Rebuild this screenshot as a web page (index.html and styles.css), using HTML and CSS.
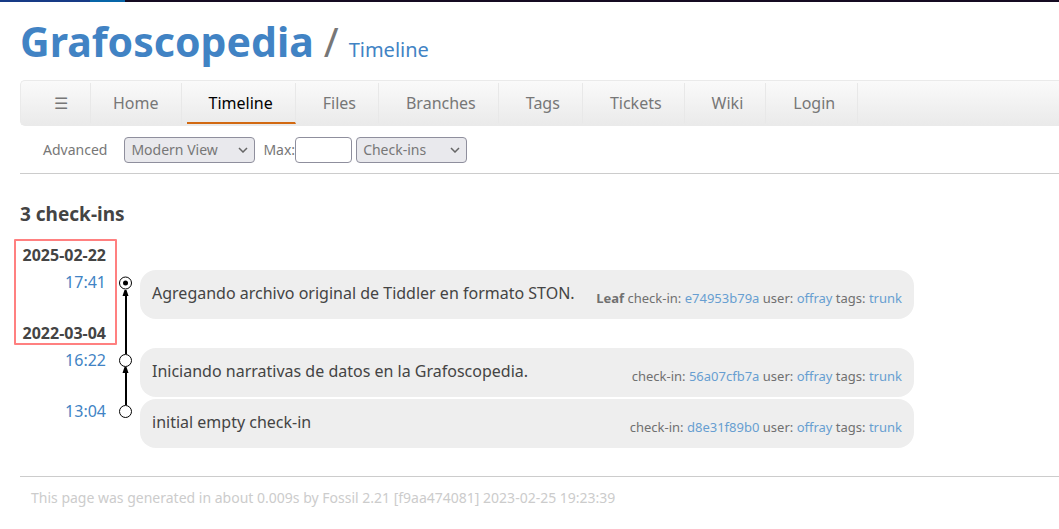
FILE: index.html
```html
<!DOCTYPE html>
<html lang="en">

<head>
    <meta charset="UTF-8">
    <meta name="viewport" content="width=device-width, initial-scale=1.0">
    <title>Grafoscopedia: Timeline</title>
    <link rel="stylesheet" href="styles.css">
</head>

<body>
    <div class="topStrip"></div>
    <header class="header">
        <h1 class="title"><a href="#">Grafoscopedia</a></h1>
        <span class="slash">/</span>
        <a class="pageTitle" href="#">Timeline</a>
    </header>
    <nav class="mainmenu">
        <a class="burger" href="#">☰</a>
        <a href="#">Home</a>
        <a class="active" href="#">Timeline</a>
        <a href="#">Files</a>
        <a href="#">Branches</a>
        <a href="#">Tags</a>
        <a href="#">Tickets</a>
        <a href="#">Wiki</a>
        <a href="#">Login</a>
    </nav>
    <form class="submenu">
        <a class="advanced" href="#">Advanced</a>
        <div class="selectBox">
            <select class="viewSelect" aria-label="View">
                <option>Modern View</option>
            </select>
            <svg class="chevron" viewBox="0 0 10 6"><path d="M1 1l4 4 4-4" /></svg>
        </div>
        <label for="max">Max:</label>
        <input class="maxInput" id="max" type="text">
        <div class="selectBox">
            <select class="typeSelect" aria-label="Type">
                <option>Check-ins</option>
            </select>
            <svg class="chevron" viewBox="0 0 10 6"><path d="M1 1l4 4 4-4" /></svg>
        </div>
    </form>
    <main class="content">
        <h2 class="subtitle">3 check-ins</h2>
        <div class="timelineWrap">
            <table class="timeline">
                <tbody>
                    <tr>
                        <th class="date">2025-02-22</th>
                        <td class="graph" rowspan="5">
                            <svg width="34" height="205" viewBox="0 0 34 205">
                                <!-- arrows, from parent up to child -->
                                <path class="line" d="M20 111V50M20 162V127" />
                                <path class="head" d="M16.500 53h6l-2-6h-2zM16.500 130h6l-2-6h-2z" />
                                <circle class="node" cx="19.500" cy="40" r="6" />
                                <circle class="node" cx="19.500" cy="117.500" r="6" />
                                <circle class="node" cx="19.500" cy="168.500" r="6" />
                                <circle class="leaf" cx="19.500" cy="40" r="2.500" />
                            </svg>
                        </td>
                        <td></td>
                    </tr>
                    <tr>
                        <td class="time"><a href="#">17:41</a></td>
                        <td>
                            <div class="card">
                                <span class="comment">Agregando archivo original de Tiddler en formato STON.</span>
                                <span class="detail"><b>Leaf</b> check-in: <a href="#">e74953b79a</a> user: <a href="#">offray</a> tags: <a href="#">trunk</a></span>
                            </div>
                        </td>
                    </tr>
                    <tr>
                        <th class="date">2022-03-04</th>
                        <td></td>
                    </tr>
                    <tr>
                        <td class="time"><a href="#">16:22</a></td>
                        <td>
                            <div class="card">
                                <span class="comment">Iniciando narrativas de datos en la Grafoscopedia.</span>
                                <span class="detail">check-in: <a href="#">56a07cfb7a</a> user: <a href="#">offray</a> tags: <a href="#">trunk</a></span>
                            </div>
                        </td>
                    </tr>
                    <tr>
                        <td class="time"><a href="#">13:04</a></td>
                        <td>
                            <div class="card">
                                <span class="comment">initial empty check-in</span>
                                <span class="detail">check-in: <a href="#">d8e31f89b0</a> user: <a href="#">offray</a> tags: <a href="#">trunk</a></span>
                            </div>
                        </td>
                    </tr>
                </tbody>
            </table>
            <div class="marker"></div>
        </div>
    </main>
    <footer class="footer">This page was generated in about 0.009s by Fossil 2.21 [f9aa474081] 2023-02-25 19:23:39</footer>
</body>

</html>
```

FILE: styles.css
```css
* {
    box-sizing: border-box;
}

body {
    margin: 0;
    background-color: #fff;
    color: #444;
    font-family: "Noto Sans", sans-serif;
    font-size: 16px;
}

a {
    color: #4183c4;
    text-decoration: none;
}

.topStrip {
    height: 2px;
    background: linear-gradient(to right, #163a86 90px, #0765a8 90px, #0765a8 125px, #150b22 125px);
}

.header {
    display: flex;
    align-items: baseline;
    height: 78px;
    padding: 11px 0 0 20px;
    line-height: 56px;
}

.title {
    margin: 0;
    font-size: 41px;
}

.slash {
    margin: 0 10px;
    color: #777;
    font-size: 40px;
}

.pageTitle {
    font-size: 20px;
}

.mainmenu {
    display: flex;
    gap: 5px;
    height: 46px;
    margin-left: 20px;
    padding: 2px 0 1px 11px;
    border: 1px solid #eaeaea;
    border-right: none;
    border-radius: 5px 0 0 5px;
    background: linear-gradient(#fafafa, #eaeaea);
}

.mainmenu a {
    padding: 0 22px;
    border-right: 1px solid #e8e8e8;
    border-bottom: 2px solid transparent;
    color: #777;
    line-height: 40px;
}

.mainmenu .burger {
    margin-right: -5px;
}

.mainmenu .active {
    border-bottom-color: #d26911;
    color: #000;
}

.submenu {
    display: flex;
    align-items: center;
    height: 48px;
    margin-left: 20px;
    padding-left: 23px;
    border-bottom: 1px solid #ccc;
    color: #777;
    font-size: 14px;
}

.advanced {
    margin-right: 17px;
    color: #777;
}

.selectBox {
    position: relative;
}

.submenu select,
.maxInput {
    display: block;
    height: 26px;
    border: 1px solid #8f8f9d;
    border-radius: 4px;
    color: #777;
    font-family: inherit;
    font-size: 14px;
}

.submenu select {
    appearance: none;
    padding: 0 6px;
    background-color: #e9e9ed;
}

.viewSelect {
    width: 131px;
    margin-right: 8px;
}

.typeSelect {
    width: 111px;
}

.maxInput {
    width: 57px;
    margin-right: 4px;
    background-color: #fff;
}

.chevron {
    position: absolute;
    top: 10px;
    right: 7px;
    width: 10px;
    height: 6px;
    fill: none;
    stroke: #666;
    stroke-width: 1.5;
    pointer-events: none;
}

.viewSelect + .chevron {
    right: 15px;
}

.content {
    padding: 26px 0 26px 20px;
}

.subtitle {
    margin: 0;
    font-size: 19px;
    line-height: 28px;
}

.timelineWrap {
    position: relative;
    padding-top: 13px;
}

.timeline {
    border-spacing: 0 2px;
}

.timeline td,
.timeline th {
    padding: 0;
}

.timeline .date {
    height: 25px;
    line-height: 25px;
    text-align: right;
}

.timeline .time {
    min-width: 86px;
    line-height: 25px;
    text-align: right;
    vertical-align: top;
}

.graph {
    vertical-align: top;
}

.graph svg {
    display: block;
}

.line {
    stroke: #000;
    stroke-width: 2;
}

.node {
    fill: #fff;
    stroke: #000;
    stroke-width: 1;
}

.card {
    display: flex;
    justify-content: space-between;
    gap: 14px;
    min-width: 774px;
    padding: 11px 12px 13px;
    border-radius: 16px;
    background-color: #eee;
    line-height: 25px;
}

.detail {
    padding-top: 9px;
    color: #707070;
    font-size: 13px;
    line-height: 16px;
}

.detail a {
    color: #679ed1;
}

/* red frame round the two dates */
.marker {
    position: absolute;
    top: 11px;
    left: -6px;
    width: 103px;
    height: 106px;
    border: 2px solid #ff8080;
    border-radius: 1px;
}

.footer {
    margin-left: 20px;
    padding: 11px;
    border-top: 1px solid #ccc;
    color: #ccc;
    font-size: 14px;
    line-height: 20px;
}
```
